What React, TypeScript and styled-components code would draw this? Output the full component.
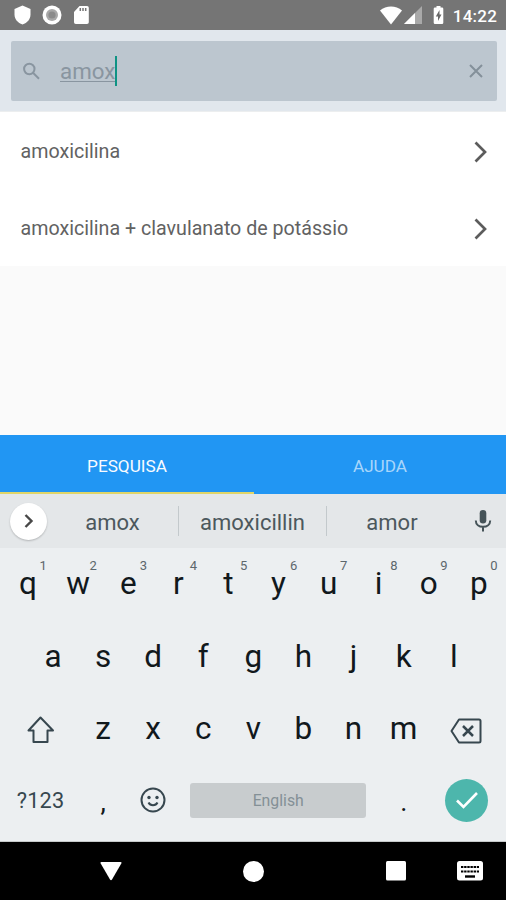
import React from "react";
import styled, { createGlobalStyle } from "styled-components";

const GlobalStyle = createGlobalStyle`
  * { box-sizing: border-box; }
  body {
    margin: 0;
    background: #fafafa;
    font-family: Roboto, "Liberation Sans", sans-serif;
  }
  svg { display: block; flex: none; }
`;

const Screen = styled.main`
  width: 506px;
  height: 900px;
  display: flex;
  flex-direction: column;
  overflow: hidden;
  background: #fafafa;
`;

const StatusBar = styled.header`
  height: 30px;
  flex: none;
  display: flex;
  align-items: center;
  justify-content: space-between;
  padding: 0 9px 0 14px;
  background: #757575;
`;

const StatusGroup = styled.div<{ $gap: number }>`
  display: flex;
  align-items: center;
  gap: ${(p) => p.$gap}px;
`;

const Clock = styled.span`
  margin-left: 5px;
  color: #fff;
  font-size: 17px;
  font-weight: 500;
  line-height: 20px;
  letter-spacing: 0.2px;
  padding-top: 1px;
`;

const SearchHeader = styled.section`
  height: 82px;
  flex: none;
  padding: 11px 9px 11px 11px;
  background: #e1e7ed;
  border-bottom: 1px solid #eceeef;
`;

const SearchBox = styled.div`
  height: 60px;
  display: flex;
  align-items: center;
  padding: 0 14px 0 11px;
  border-radius: 2px;
  background: #bcc6cf;
`;

const Query = styled.span`
  margin-left: 20px;
  color: #8995a0;
  font-size: 22.3px;
  line-height: 20px;
  border-bottom: 1px solid #8995a0;
`;

const Caret = styled.span`
  width: 2px;
  height: 30px;
  margin-right: auto;
  margin-top: -1px;
  background: #0f9384;
`;

const Results = styled.ul`
  flex: none;
  height: 154px;
  margin: 0;
  padding: 2px 0 0;
  list-style: none;
  background: #fff;
`;

const ResultRow = styled.li`
  height: 77px;
  display: flex;
  align-items: center;
  justify-content: space-between;
  padding: 0 19.5px 1px 20.5px;
  color: #626262;
  font-size: 19.65px;
  line-height: 24px;
`;

const Blank = styled.div`
  flex: 1;
`;

const Tabs = styled.nav`
  height: 59px;
  flex: none;
  display: grid;
  grid-template-columns: 254px 252px;
  background: #2196f3;
`;

const Tab = styled.div<{ $active?: boolean }>`
  display: flex;
  align-items: center;
  justify-content: center;
  padding-top: 4px;
  border-bottom: 2px solid ${(p) => (p.$active ? "#e0d568" : "#2196f3")};
  color: ${(p) => (p.$active ? "#f8fbff" : "#a9d6fb")};
  font-size: 17.2px;
`;

const Suggestions = styled.div`
  height: 54px;
  flex: none;
  display: flex;
  align-items: center;
  padding: 0 14px 0 10px;
  background: #e4e7e9;
`;

const ExpandButton = styled.div`
  width: 37px;
  height: 37px;
  flex: none;
  display: flex;
  align-items: center;
  justify-content: center;
  border-radius: 50%;
  background: #fff;
  box-shadow: 0 1px 2px rgba(0, 0, 0, 0.22);
`;

const Suggestion = styled.span<{ $width: number }>`
  width: ${(p) => p.$width}px;
  text-align: center;
  color: #4c585d;
  font-size: 22px;
  padding-top: 2px;
`;

const Divider = styled.span`
  width: 1px;
  height: 30px;
  background: #c3c9cc;
`;

const VoiceButton = styled.div`
  margin-left: auto;
`;

const Keyboard = styled.section`
  height: 294px;
  flex: none;
  padding: 0 2px 0 3px;
  background: #eceff1;
  border-bottom: 1px solid #c6c9ca;
`;

const KeyRow = styled.div<{ $inset?: number; $lift?: number }>`
  height: 72.5px;
  display: flex;
  align-items: center;
  padding: 0 ${(p) => p.$inset ?? 0}px ${(p) => p.$lift ?? 0}px;
`;

const Key = styled.div<{ $width?: number; $drop?: number }>`
  position: relative;
  width: ${(p) => p.$width ?? 50.1}px;
  height: 100%;
  flex: none;
  display: flex;
  align-items: center;
  justify-content: center;
  padding-top: ${(p) => p.$drop ?? 0}px;
  color: #11181c;
  font-size: 31.5px;
  line-height: 36px;
`;

const Hint = styled.span`
  position: absolute;
  top: 10px;
  left: 36.5px;
  color: #5c676c;
  font-size: 13px;
  line-height: 16px;
`;

const SymbolsLabel = styled.span`
  color: #37474f;
  font-size: 21.7px;
  letter-spacing: 0.2px;
`;

const Punctuation = styled.span`
  font-size: 27px;
  padding-top: 4px;
`;

const SpaceBar = styled.div`
  width: 176px;
  height: 35px;
  margin-left: 12px;
  display: flex;
  align-items: center;
  justify-content: center;
  padding-top: 1px;
  border-radius: 3px;
  background: #c8ccce;
  color: #849096;
  font-size: 15.8px;
`;

const EnterButton = styled.div`
  width: 43px;
  height: 43px;
  margin-left: 4px;
  display: flex;
  align-items: center;
  justify-content: center;
  border-radius: 50%;
  background: #4db6ac;
`;

const NavBar = styled.footer`
  height: 58px;
  flex: none;
  display: flex;
  align-items: center;
  padding: 0 23px 0 100px;
  background: #000;
`;

const NavIcon = styled.div<{ $before?: number }>`
  margin-left: ${(p) => p.$before ?? 0}px;
`;

const Chevron = () => (
  <svg width="13" height="22" viewBox="0 0 13 22" fill="none" stroke="#5c5c5c" strokeWidth="2.7">
    <path d="M1.500 1.500 11 11l-9.500 9.500" />
  </svg>
);

const topKeys = [..."qwertyuiop"];
const hints = [..."1234567890"];

export default function App() {
  return (
    <>
      <GlobalStyle />
      <Screen>
        <StatusBar>
          <StatusGroup $gap={11}>
            <svg width="17" height="20" viewBox="0 0 17 20" fill="#fff">
              <path d="M8.500.5 16.500 4v5.500c0 4.500-3.200 8.500-8 10-4.800-1.500-8-5.500-8-10V4z" />
            </svg>
            <svg width="20" height="20" viewBox="0 0 20 20">
              <circle cx="10" cy="10" r="9.500" fill="#fff" />
              <circle cx="10" cy="10" r="6" fill="#a8a8a8" />
              <circle cx="10" cy="10" r="3.600" fill="#8b8b8b" />
            </svg>
            <svg width="17" height="20" viewBox="0 0 17 20">
              <path d="M6.500 1H14a1.800 1.800 0 0 1 1.800 1.800v14.400A1.800 1.800 0 0 1 14 19H2.800A1.800 1.800 0 0 1 1 17.200V7z" fill="#fff" />
              <path d="M7.300 3v3M10 3v3M12.700 3v3" stroke="#757575" strokeWidth="1.500" />
            </svg>
          </StatusGroup>
          <StatusGroup $gap={2}>
            <svg width="22" height="19" viewBox="0 0 22 19" fill="#fff">
              <path d="M0 4.500C6-1 16-1 22 4.500L11 18.500z" />
            </svg>
            <svg width="18" height="18" viewBox="0 0 18 18">
              <path d="M0 18 18 0v18z" fill="#a9a9a9" />
              <path d="M0 18 11 7v11z" fill="#fff" />
            </svg>
            <svg width="22" height="20" viewBox="0 0 22 20">
              <path d="M11 2.500h1.500V1h4v1.500H18a1.300 1.300 0 0 1 1.300 1.300v13.900A1.300 1.300 0 0 1 18 19h-7a1.300 1.300 0 0 1-1.300-1.300V3.800A1.300 1.300 0 0 1 11 2.500z" fill="#fff" />
              <path d="M15.500 5 11.800 11.500h2.200V16l3.500-6.500h-2z" fill="#686868" />
            </svg>
            <Clock>14:22</Clock>
          </StatusGroup>
        </StatusBar>

        <SearchHeader>
          <SearchBox>
            <svg width="18" height="18" viewBox="0 0 18 18" fill="none" stroke="#8995a0" strokeWidth="2">
              <circle cx="7.300" cy="7" r="5.200" />
              <path d="m11 10.700 6 6" />
            </svg>
            <Query>amox</Query>
            <Caret />
            <svg width="14" height="14" viewBox="0 0 14 14" stroke="#84909a" strokeWidth="2">
              <path d="m1 1 12 12M13 1 1 13" />
            </svg>
          </SearchBox>
        </SearchHeader>

        <Results>
          <ResultRow>amoxicilina<Chevron /></ResultRow>
          <ResultRow>amoxicilina + clavulanato de potássio<Chevron /></ResultRow>
        </Results>
        <Blank />

        <Tabs>
          <Tab $active>PESQUISA</Tab>
          <Tab>AJUDA</Tab>
        </Tabs>

        <Suggestions>
          <ExpandButton>
            <svg width="10" height="16" viewBox="0 0 10 16" fill="none" stroke="#484848" strokeWidth="2.400">
              <path d="m1.500 2 6 6-6 6" />
            </svg>
          </ExpandButton>
          <Suggestion $width={131}>amox</Suggestion>
          <Divider />
          <Suggestion $width={147}>amoxicillin</Suggestion>
          <Divider />
          <Suggestion $width={130}>amor</Suggestion>
          <VoiceButton>
            <svg width="18" height="24" viewBox="0 0 18 24" fill="none">
              <rect x="5.700" y="1" width="6.600" height="13.500" rx="3.300" fill="#455358" />
              <path d="M1.800 11.500c0 4 3.200 6.300 7.200 6.300s7.200-2.300 7.200-6.300M9 18v4.500" stroke="#455358" strokeWidth="2" />
            </svg>
          </VoiceButton>
        </Suggestions>

        <Keyboard>
          <KeyRow>
            {topKeys.map((letter, i) => (
              <Key key={letter}>
                {letter}
                <Hint>{hints[i]}</Hint>
              </Key>
            ))}
          </KeyRow>
          <KeyRow $inset={25}>
            {[..."asdfghjkl"].map((letter) => (
              <Key key={letter}>{letter}</Key>
            ))}
          </KeyRow>
          <KeyRow>
            <Key $width={75} $drop={2}>
              <svg width="28" height="28" viewBox="0 0 28 28" fill="none" stroke="#37474f" strokeWidth="2" strokeLinejoin="round">
                <path d="M13.500 1.500 1.500 14.500h5V26h14V14.500h5.500z" />
              </svg>
            </Key>
            {[..."zxcvbnm"].map((letter) => (
              <Key key={letter}>{letter}</Key>
            ))}
            <Key $width={75} $drop={4}>
              <svg width="32" height="26" viewBox="0 0 32 26" fill="none" stroke="#37474f" strokeWidth="2" strokeLinejoin="round">
                <path d="M9 1.500h20a1.500 1.500 0 0 1 1.500 1.500v20a1.500 1.500 0 0 1-1.500 1.500H9L1.500 13z" />
                <path d="m13 8 10 10M23 8 13 18" strokeWidth="2.500" />
              </svg>
            </Key>
          </KeyRow>
          <KeyRow $lift={3}>
            <Key $width={75} $drop={2}><SymbolsLabel>?123</SymbolsLabel></Key>
            <Key><Punctuation>,</Punctuation></Key>
            <Key>
              <svg width="26" height="26" viewBox="0 0 26 26" fill="none" stroke="#37474f" strokeWidth="2">
                <circle cx="13" cy="13" r="11.500" />
                <circle cx="9" cy="10.500" r="1.700" fill="#37474f" stroke="none" />
                <circle cx="17" cy="10.500" r="1.700" fill="#37474f" stroke="none" />
                <path d="M8.500 15.500c1.800 3.500 7.200 3.500 9 0" />
              </svg>
            </Key>
            <SpaceBar>English</SpaceBar>
            <Key $width={75}><Punctuation>.</Punctuation></Key>
            <EnterButton>
              <svg width="22" height="18" viewBox="0 0 22 18" fill="none" stroke="#fff" strokeWidth="2.600">
                <path d="m1 9.500 6.500 6.500L21 2" />
              </svg>
            </EnterButton>
          </KeyRow>
        </Keyboard>

        <NavBar>
          <NavIcon>
            <svg width="22" height="19" viewBox="0 0 22 19" fill="#fff">
              <path d="M1.500 0h19a1 1 0 0 1 .8 1.500L12 17.500a1.200 1.200 0 0 1-2 0L.7 1.500A1 1 0 0 1 1.500 0z" />
            </svg>
          </NavIcon>
          <NavIcon $before={121}>
            <svg width="21" height="21" viewBox="0 0 21 21" fill="#fff">
              <circle cx="10.500" cy="10.500" r="10.500" />
            </svg>
          </NavIcon>
          <NavIcon $before={122}>
            <svg width="20" height="20" viewBox="0 0 20 20" fill="#fff">
              <rect width="20" height="19.500" rx="1.500" />
            </svg>
          </NavIcon>
          <NavIcon $before={51}>
            <svg width="26" height="20" viewBox="0 0 26 20">
              <rect width="26" height="19.500" rx="2.500" fill="#fff" />
              <path d="M4 6h18M4 10.500h18" stroke="#000" strokeWidth="2.200" strokeDasharray="2.400 .75" />
              <path d="M8 15.500h10" stroke="#000" strokeWidth="2.400" />
            </svg>
          </NavIcon>
        </NavBar>
      </Screen>
    </>
  );
}
